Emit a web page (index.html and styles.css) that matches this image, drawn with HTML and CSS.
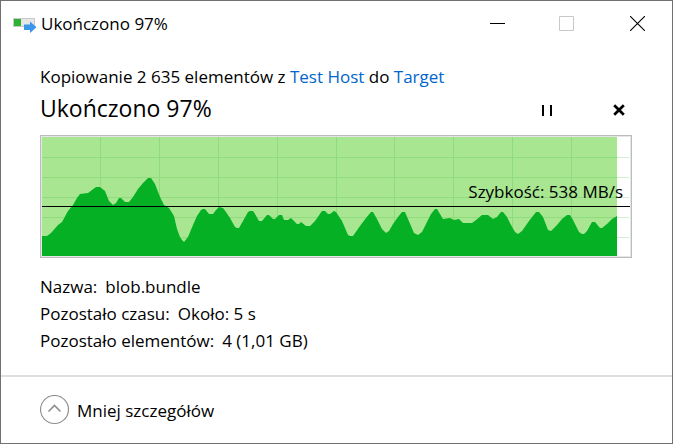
FILE: index.html
```html
<!DOCTYPE html>
<html lang="pl">
<head>
<meta charset="utf-8">
<title>Ukończono 97%</title>
<link rel="stylesheet" href="styles.css">
</head>
<body>
<div class="window">
  <header class="titlebar">
    <svg class="app-icon" width="24" height="16" viewBox="0 0 24 16" aria-hidden="true">
      <rect x="0.5" y="1.500" width="21" height="8" fill="#e6e6e6" stroke="#c9c9c9"/>
      <rect x="1" y="2" width="7" height="7" fill="#2fb135"/>
      <path d="M11 7.500h6V4.500l6.500 5.700-6.500 5.700v-3h-6z" fill="#3a96e8"/>
    </svg>
    <span class="caption">Ukończono 97%</span>
    <button class="win-btn" type="button" aria-label="Minimalizuj">
      <svg width="15" height="15" viewBox="0 0 15 15"><path d="M0 7.500h15" stroke="#000"/></svg>
    </button>
    <button class="win-btn" type="button" aria-label="Maksymalizuj" disabled>
      <svg width="16" height="15" viewBox="0 0 16 15"><path d="M.5.5h14v14H.5z" fill="none" stroke="#c8c8c8"/></svg>
    </button>
    <button class="win-btn" type="button" aria-label="Zamknij">
      <svg width="15" height="15" viewBox="0 0 15 15"><path d="M0 0l15 15M15 0L0 15" stroke="#000" stroke-width="1.100"/></svg>
    </button>
  </header>

  <main class="content">
    <p class="summary">Kopiowanie 2 635 elementów z <a href="#source">Test Host</a> do <a href="#target">Target</a></p>
    <div class="status">
      <h1>Ukończono 97%</h1>
      <button class="op-btn" type="button" aria-label="Wstrzymaj">
        <svg width="10" height="11" viewBox="0 0 10 11"><path d="M0 0h2v11H0zM8 0h2v11H8z"/></svg>
      </button>
      <button class="op-btn" type="button" aria-label="Anuluj">
        <svg width="12" height="12" viewBox="0 0 12 12"><path d="M1.200 1.200l9.600 9.600M10.800 1.200L1.200 10.800" stroke="#000" stroke-width="2.700"/></svg>
      </button>
    </div>

    <div class="chart">
      <svg class="plot" viewBox="42 137 588 119" preserveAspectRatio="none" aria-hidden="true">
        <path d="M42 157.500H629M42 177.500H629M42 197.500H629M42 217.500H629M42 237.500H629" stroke="#d2efd0"/>
        <rect x="42" y="137" width="575" height="119" fill="#a8e691"/>
        <path d="M42 157.500H617M42 177.500H617M42 197.500H617M42 217.500H617M42 237.500H617M100.500 137v119M159.500 137v119M218.500 137v119M277.500 137v119M336.500 137v119M394.500 137v119M453.500 137v119M512.500 137v119M571.500 137v119" stroke="#8edc7c"/>
        <path fill="#06b025" d="M42 256V236L47 236 51 233 58 225 62 222 68 211 73 205 77 198 80 194 88 193 96 187 100 187 105 191 109 201 113 205 116 203 119 198 121 198 125 202 129 202 133 197 138 189 143 183 148 178 151 178 155 184 160 197 164 205 169 208 174 216 177 229 180 237 182 240 184 242 188 237 193 225 197 216 201 210 203 209 205 209 209 214 213 214 216 210 219 207 223 208 226 212 230 218 235 227 237 228 239 228 243 221 248 212 250 211 253 211 255 214 259 221 262 221 267 215 269 215 273 219 275 219 279 215 282 215 284 220 288 220 291 218 297 224 299 224 301 222 306 226 310 226 315 221 322 211 325 211 328 214 330 214 334 211 336 212 342 221 348 235 350 236 353 236 360 226 366 218 371 212 373 212 377 219 382 229 386 233 389 231 393 224 398 217 402 212 405 212 408 219 414 233 418 235 422 232 427 222 431 214 435 209 437 209 440 214 443 219 450 218 454 220 459 219 463 223 472 223 476 220 482 215 488 215 493 219 497 217 501 212 503 212 507 217 511 225 515 232 518 234 522 231 529 221 536 212 539 212 543 217 548 230 551 231 557 225 562 219 567 215 570 215 573 220 579 232 582 234 584 234 587 231 592 222 595 222 600 228 602 228 607 224 612 219 617 216V256Z"/>
        <path d="M42 206.500H630" stroke="#000"/>
      </svg>
      <span class="speed">Szybkość: 538 MB/s</span>
    </div>

    <dl class="details">
      <div><dt>Nazwa:</dt><dd>blob.bundle</dd></div>
      <div><dt>Pozostało czasu:</dt><dd>Około: 5 s</dd></div>
      <div><dt>Pozostało elementów:</dt><dd>4 (1,01 GB)</dd></div>
    </dl>
  </main>

  <footer class="footer">
    <button class="toggle" type="button">
      <svg width="30" height="30" viewBox="0 0 30 30" fill="none" aria-hidden="true">
        <circle cx="14.500" cy="14.500" r="14" stroke="#8f8f8f" stroke-width="1.200"/>
        <path d="M8.500 16.500l6-6 6 6" stroke="#8f8f8f" stroke-width="1.600"/>
      </svg>
      <span>Mniej szczegółów</span>
    </button>
  </footer>
</div>
</body>
</html>
```
FILE: styles.css
```css
* {
  box-sizing: border-box;
}

body {
  margin: 0;
  background: #fff;
  color: #000;
  font: 17px/27px "Segoe UI", "Open Sans", "Noto Sans", sans-serif;
}

.window {
  display: flex;
  flex-direction: column;
  min-height: 100vh;
  border: 1px solid #707070;
  background: #fff;
}

button {
  padding: 0;
  border: 0;
  background: none;
  color: inherit;
  font: inherit;
}

svg {
  display: block;
}

.titlebar {
  display: flex;
  align-items: center;
  height: 44px;
  padding-left: 12px;
}

.app-icon {
  margin: 4px 4px 0 0;
}

.caption {
  flex: 1;
}

.win-btn {
  display: grid;
  place-items: center;
  width: 70px;
  height: 44px;
}

.content {
  flex: 1;
  padding: 18px 40px 0 39px;
}

.summary {
  margin: 0;
}

.summary a {
  color: #0066cc;
  text-decoration: none;
}

.status {
  display: flex;
  align-items: center;
  height: 40px;
  margin-right: -23px;
}

.status h1 {
  flex: 1;
  margin: 0;
  padding-bottom: 4px;
  font-size: 23px;
  font-weight: 400;
  line-height: 32px;
}

.op-btn {
  display: grid;
  place-items: center;
  width: 72px;
  height: 32px;
}

.chart {
  position: relative;
  margin-top: 5px;
  padding: 1px;
  border: 1px solid #bcbcbc;
  background: #e6e6ea;
}

.plot {
  width: 100%;
  height: 119px;
  background: #fff;
}

.speed {
  position: absolute;
  top: 42px;
  right: 8px;
}

.details {
  margin: 15px 0 0;
}

.details div {
  display: flex;
  gap: 8px;
}

.details dd {
  margin: 0;
}

.footer {
  height: 68px;
  padding: 18px 39px;
  border-top: 2px solid #dfdfdf;
}

.toggle {
  display: flex;
  align-items: center;
  gap: 7px;
}
```
